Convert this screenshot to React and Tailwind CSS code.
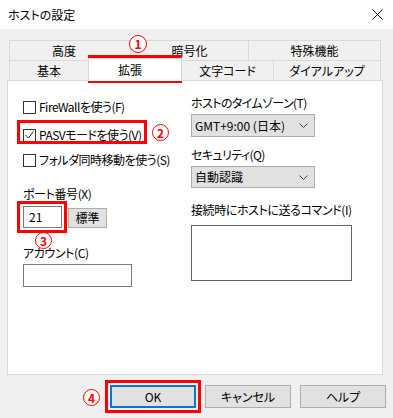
import React from 'react';

const RED = 'border-[#f00]';

function Circled({ n, className }) {
  // red circled step number laid over the dialog
  return (
    <div
      className={`absolute flex items-center justify-center rounded-full border-[1.5px] ${RED} bg-white text-[#f00] text-[12px] font-bold leading-none ${className}`}
    >
      {n}
    </div>
  );
}

function Check({ checked, label }) {
  return (
    <div className="flex items-center h-[14px]">
      <div className="w-[13px] h-[13px] border border-[#333] bg-white flex items-center justify-center">
        {checked && (
          <svg width="9" height="8" viewBox="0 0 9 8">
            <polyline points="0.5,4 3.5,7 8.5,0.5" fill="none" stroke="#222" strokeWidth="1" />
          </svg>
        )}
      </div>
      <span className="ml-[3px] tracking-[-0.5px]">{label}</span>
    </div>
  );
}

function Select({ value, h }) {
  return (
    <div className={`w-[124px] ${h} bg-[#e1e1e1] border border-[#adadad] flex items-center justify-between pl-[3px] pr-[6px]`}>
      <span>{value}</span>
      <svg width="9" height="5" viewBox="0 0 9 5">
        <polyline points="0.5,0.5 4.5,4.5 8.5,0.5" fill="none" stroke="#444" strokeWidth="1" />
      </svg>
    </div>
  );
}

export default function App() {
  return (
    <div className="relative w-[393px] h-[418px] bg-[#f0f0f0] text-[12px] leading-[16px] text-black font-['Noto_Sans_CJK_JP','Noto_Sans',sans-serif] [font-feature-settings:'palt'] overflow-hidden">
      {/* title bar */}
      <div className="h-[29px] bg-white flex items-center justify-between pl-[8px] pr-[10px]">
        <span>ホストの設定</span>
        <svg width="11" height="11" viewBox="0 0 11 11">
          <path d="M0.5 0.5 L10.5 10.5 M10.5 0.5 L0.5 10.5" stroke="#111" strokeWidth="1" />
        </svg>
      </div>

      {/* tabs */}
      <div className="mt-[11px] ml-[9px] w-[372px]">
        <div className="flex h-[20px]">
          <div className="w-[121px] border-t border-l border-[#d9d9d9] flex items-center justify-center pr-[12px]">高度</div>
          <div className="w-[118px] border-t border-l border-[#d9d9d9] flex items-center justify-center">暗号化</div>
          <div className="w-[133px] border-t border-l border-r border-[#d9d9d9] flex items-center justify-center">特殊機能</div>
        </div>
        <div className="flex h-[20px]">
          <div className="w-[79px] border-t border-l border-[#d9d9d9] flex items-center justify-center">基本</div>
          <div className="relative z-10 w-[94px] h-[23px] -mt-[2px] bg-white border-t border-l border-r border-[#d9d9d9] flex items-center justify-center pr-[10px]">拡張</div>
          <div className="w-[91px] border-t border-[#d9d9d9] flex items-center justify-center">文字コード</div>
          <div className="w-[108px] border-t border-l border-r border-[#d9d9d9] flex items-center justify-center">ダイアルアップ</div>
        </div>
      </div>

      {/* panel */}
      <div className="ml-[7px] w-[376px] h-[295px] bg-white border border-[#d9d9d9] flex">
        <div className="w-[183px] pl-[15px] flex flex-col">
          <div className="mt-[19px]"><Check label="FireWallを使う(F)" /></div>
          <div className="mt-[14px]"><Check checked label="PASVモードを使う(V)" /></div>
          <div className="mt-[11px]"><Check label="フォルダ同時移動を使う(S)" /></div>
          <div className="mt-[19px] tracking-[-0.4px]">ポート番号(X)</div>
          <div className="mt-[4px] flex items-start">
            <div className="w-[39px] h-[22px] border border-[#7a7a7a] flex items-center pl-[5px]">21</div>
            <div className="ml-[6px] mt-[2px] w-[39px] h-[20px] bg-[#e1e1e1] border border-[#adadad] flex items-center justify-center">標準</div>
          </div>
          <div className="mt-[17px] tracking-[-0.4px]">アカウント(C)</div>
          <div className="mt-[3px] w-[109px] h-[23px] border border-[#7a7a7a]" />
        </div>
        <div className="flex flex-col tracking-[-0.6px]">
          <div className="mt-[14px]">ホストのタイムゾーン(T)</div>
          <div className="mt-[3px] tracking-normal"><Select value="GMT+9:00 (日本)" h="h-[23px]" /></div>
          <div className="mt-[10px]">セキュリティ(Q)</div>
          <div className="mt-[3px] tracking-normal"><Select value="自動認識" h="h-[22px]" /></div>
          <div className="mt-[14px] tracking-[-0.4px]">接続時にホストに送るコマンド(I)</div>
          <div className="mt-[7px] w-[161px] h-[56px] border border-[#646464]" />
        </div>
      </div>

      {/* buttons */}
      <div className="mt-[10px] pl-[110px] flex gap-[9px]">
        <div className="w-[86px] h-[23px] bg-[#e1e1e1] border-2 border-[#0078d7] flex items-center justify-center">OK</div>
        <div className="w-[86px] h-[23px] bg-[#e1e1e1] border border-[#adadad] flex items-center justify-center">キャンセル</div>
        <div className="w-[86px] h-[23px] bg-[#e1e1e1] border border-[#adadad] flex items-center justify-center">ヘルプ</div>
      </div>

      {/* annotations */}
      <div className={`absolute left-[88px] top-[55px] w-[94px] h-[28px] border-[3px] ${RED}`} />
      <div className={`absolute left-[17px] top-[120px] w-[130px] h-[24px] border-[3px] ${RED}`} />
      <div className={`absolute left-[17px] top-[201px] w-[50px] h-[32px] border-[3px] ${RED}`} />
      <div className={`absolute left-[105px] top-[380px] w-[96px] h-[33px] border-[3px] ${RED}`} />
      <Circled n="1" className="left-[129px] top-[35px] w-[18px] h-[18px]" />
      <Circled n="2" className="left-[152px] top-[124px] w-[17px] h-[17px]" />
      <Circled n="3" className="left-[35px] top-[232px] w-[17px] h-[17px]" />
      <Circled n="4" className="left-[83px] top-[389px] w-[17px] h-[17px]" />
    </div>
  );
}
